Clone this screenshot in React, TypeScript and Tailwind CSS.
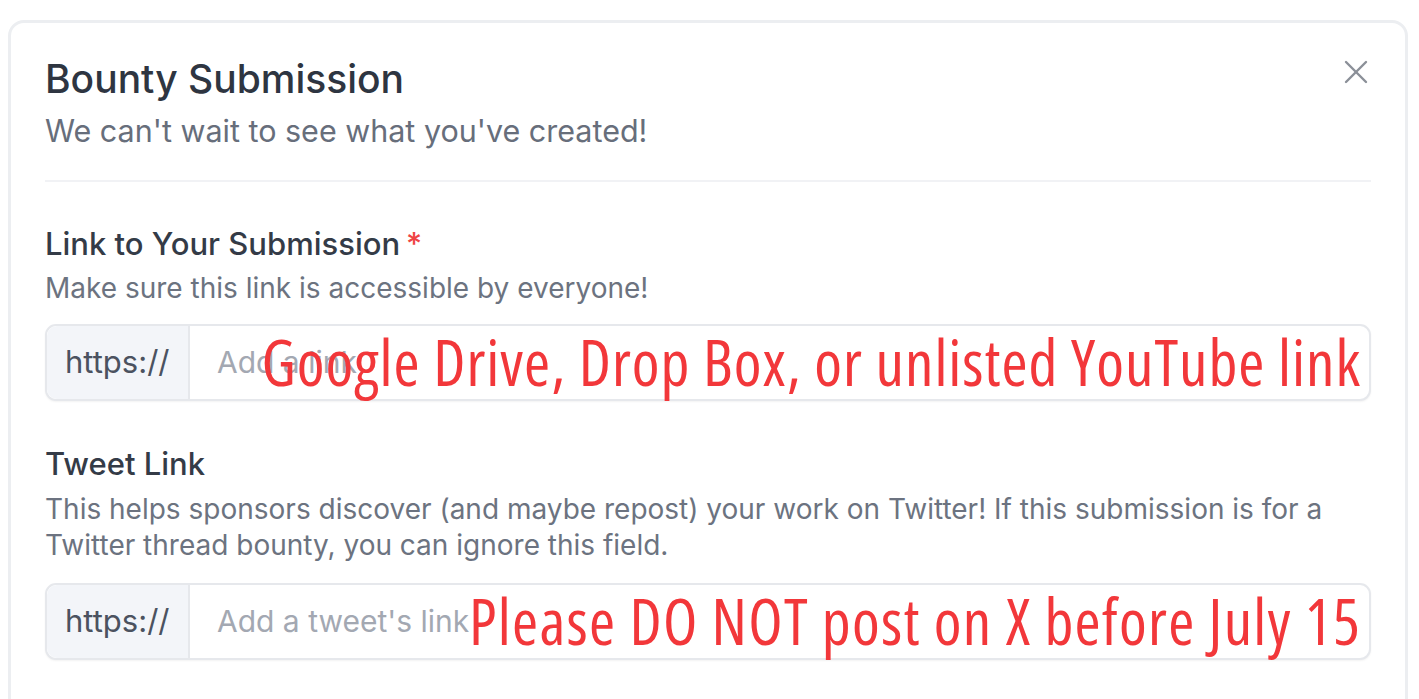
function CloseIcon() {
  return (
    <svg width="26" height="26" viewBox="0 0 26 26" fill="none" stroke="#8b9098" strokeWidth="2.4" strokeLinecap="round">
      <path d="M3 3 L23 23" />
      <path d="M23 3 L3 23" />
    </svg>
  );
}

function LinkInput({ placeholder, note, noteClass }: { placeholder: string; note: string; noteClass: string }) {
  return (
    <div className="relative flex h-[77px] w-full rounded-[11px] border-2 border-[#e6e8ec] bg-white shadow-[0_1px_2px_rgba(0,0,0,0.05)]">
      <div className="flex w-[143px] shrink-0 items-center rounded-l-[10px] border-r-2 border-[#e6e8ec] bg-[#f3f5f9] pl-[18px] text-[31px] text-[#4b5260]">
        https://
      </div>
      <div className="flex flex-1 items-center pl-[27px] text-[30px] text-[#a3a8b2]">{placeholder}</div>
      <div
        className={"absolute right-[8px] top-[-4px] whitespace-nowrap text-[63px] leading-[80px] text-[#f2373a] " + noteClass}
        style={{ fontFamily: "'Open Sans', sans-serif", fontStretch: "75%" }}
      >
        {note}
      </div>
    </div>
  );
}

export default function App() {
  return (
    <div className="min-h-[699px] w-[1419px] overflow-hidden bg-white pl-[8px] pr-[11px] pt-[20px]" style={{ fontFamily: "Inter, 'Liberation Sans', sans-serif" }}>
      <div className="relative h-[720px] rounded-[16px] border-[3px] border-[#eceef1] bg-white px-[34px] pt-[33px]">
        <button className="absolute right-[36px] top-[36px]">
          <CloseIcon />
        </button>
        <h1 className="text-[39px] font-medium leading-[46px] text-[#2e3541]">Bounty Submission</h1>
        <p className="mt-[11px] text-[30.5px] leading-[36px] text-[#676e7b]">We can't wait to see what you've created!</p>
        <div className="mt-[31px] h-[2px] bg-[#f1f2f5]" />

        <div className="mt-[44px] text-[31px] font-medium leading-[36px] text-[#343b47]">
          Link to Your Submission<span className="ml-[6px] text-[#ef4444]">*</span>
        </div>
        <p className="mt-[10px] text-[28px] leading-[32px] text-[#6c7380]">Make sure this link is accessible by everyone!</p>
        <div className="mt-[20px]">
          <LinkInput placeholder="Add a link" note="Google Drive, Drop Box, or unlisted YouTube link" noteClass="tracking-[1px]" />
        </div>

        <div className="mt-[45px] text-[31px] font-medium leading-[36px] text-[#343b47]">Tweet Link</div>
        <p className="mt-[9px] text-[28px] leading-[36px] text-[#6c7380]">
          This helps sponsors discover (and maybe repost) your work on Twitter! If this submission is for a Twitter thread bounty, you can ignore this field.
        </p>
        <div className="mt-[20px]">
          <LinkInput placeholder="Add a tweet's link" note="Please DO NOT post on X before July 15" noteClass="tracking-[1.3px]" />
        </div>
      </div>
    </div>
  );
}
